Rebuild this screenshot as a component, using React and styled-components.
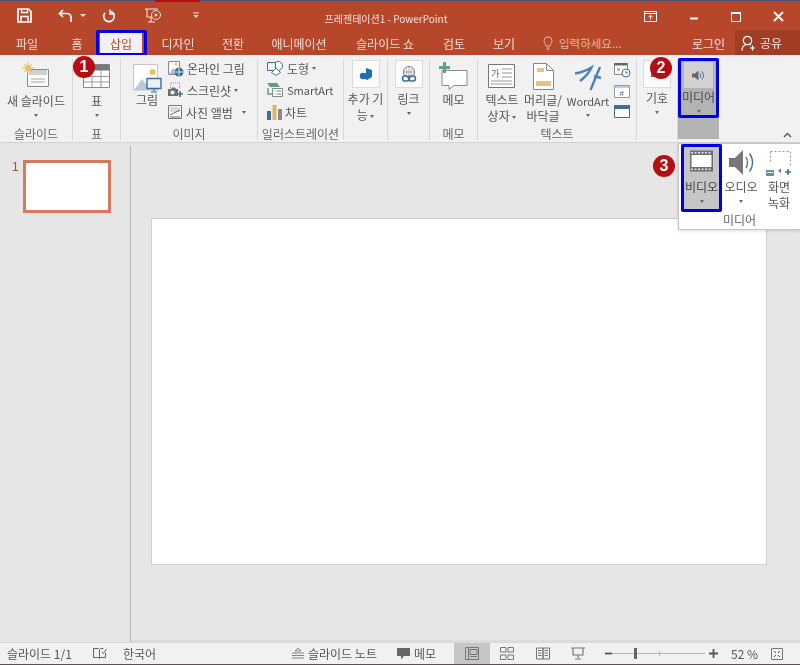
import React from 'react';
import styled, { createGlobalStyle } from 'styled-components';

const Global = createGlobalStyle`
  html, body { margin: 0; padding: 0; background: #e6e6e6; }
  body { font-family: "Noto Sans CJK KR", "Noto Sans", sans-serif; color: #444; }
`;

const Window = styled.div`
  position: relative;
  width: 800px;
  height: 665px;
  overflow: hidden;
  display: flex;
  flex-direction: column;
  filter: blur(0.3px);
`;

const TitleBar = styled.div`
  position: relative;
  height: 30px;
  flex: none;
  background: #b7472a;
  border-top: 1px solid #4f5070;
  box-sizing: border-box;
  display: grid;
  grid-template-columns: 240px 1fr 240px;
  align-items: center;
  color: #f6e4de;
`;

const TopEdge = styled.span`
  position: absolute;
  left: 155px;
  top: -1px;
  width: 45px;
  height: 2px;
  background: #b40d12;
`;

const Qat = styled.div`
  display: flex;
  align-items: center;
  height: 100%;
  padding-left: 17px;
`;

const QatSlot = styled.span`
  display: flex;
  width: ${p => p.$w}px;
  align-items: center;
`;

const Title = styled.div`
  text-align: center;
  font-size: 10px;
  padding-top: 6px;
  padding-right: 28px;
  white-space: nowrap;
`;

const WinControls = styled.div`
  display: flex;
  justify-content: flex-end;
  align-items: center;
  padding-right: 16px;
  gap: 32px;
  padding-top: 2px;
`;

const TabStrip = styled.div`
  height: 25px;
  flex: none;
  background: #b7472a;
  display: flex;
  align-items: stretch;
  color: #f5dfd8;
  font-size: 12px;
`;

const Tab = styled.div`
  position: relative;
  width: ${p => p.$w}px;
  flex: none;
  display: flex;
  align-items: center;
  justify-content: center;
  background: ${p => (p.$active ? '#f1f1f1' : 'transparent')};
  color: ${p => (p.$active ? '#b7472a' : 'inherit')};
  padding-top: 2px;
  box-sizing: border-box;
  white-space: nowrap;
`;

const TabMark = styled.span`
  position: absolute;
  left: -4px;
  right: -5px;
  top: 0;
  bottom: -1px;
  border: 3px solid #0000e6;
  border-radius: 2px;
`;

const TellMe = styled.div`
  display: flex;
  align-items: center;
  gap: 6px;
  margin-left: 19px;
  padding-top: 1px;
  color: #e3b3a4;
  font-size: 11.5px;
`;

const Login = styled.div`
  margin-left: auto;
  display: flex;
  align-items: center;
  padding-top: 1px;
  margin-right: 10px;
`;

const Share = styled.div`
  width: 65px;
  background: #a13d24;
  display: flex;
  align-items: center;
  gap: 4px;
  padding-left: 6px;
  box-sizing: border-box;
  color: #fbeee9;
`;

const Ribbon = styled.div`
  position: relative;
  height: 88px;
  flex: none;
  background: #f1f1f1;
  border-bottom: 1px solid #d2d2d2;
  box-sizing: border-box;
  display: flex;
  font-size: 12px;
  color: #555;
`;

const Group = styled.section`
  position: relative;
  width: ${p => p.$w}px;
  flex: none;
  display: flex;
  flex-direction: column;
  box-sizing: border-box;
  border-right: 1px solid #d8d8d8;
  margin: 4px 0 2px;
`;

const GroupBody = styled.div`
  flex: 1;
  display: flex;
  min-height: 0;
  justify-content: ${p => p.$justify || 'flex-start'};
  padding-left: ${p => p.$pl || 0}px;
`;

const GroupLabel = styled.div`
  height: 12px;
  line-height: 12px;
  text-align: center;
  font-size: 12px;
  color: #666;
  white-space: nowrap;
`;

const Big = styled.div`
  width: ${p => p.$w || 44}px;
  margin-left: ${p => p.$ml || 0}px;
  flex: none;
  display: flex;
  flex-direction: column;
  align-items: center;
  line-height: 16px;
  text-align: center;
  white-space: nowrap;
`;

const BigIcon = styled.div`
  height: ${p => p.$h || 34}px;
  flex: none;
  padding-top: ${p => p.$pt || 0}px;
  box-sizing: border-box;
  display: flex;
  align-items: flex-start;
  justify-content: center;
`;

const IconTile = styled.div`
  width: 28px;
  height: 28px;
  background: #fbfbfb;
  border: 1px solid #dcdcdc;
  box-sizing: border-box;
  display: flex;
  align-items: center;
  justify-content: center;
`;

const Stack = styled.div`
  display: flex;
  flex-direction: column;
  flex: none;
  padding-top: ${p => p.$pt || 0}px;
  gap: ${p => p.$gap || 0}px;
  margin-left: ${p => p.$ml || 0}px;
  margin-top: ${p => p.$mt || 0}px;
`;

const SmallRow = styled.div`
  display: flex;
  align-items: center;
  flex: none;
  height: 22px;
  gap: 3px;
  white-space: nowrap;
`;

const Latin = styled.span`
  font-size: 11px;
`;

const Caret = styled.i`
  display: ${p => (p.$inline ? 'inline-block' : 'block')};
  width: 0;
  height: 0;
  border-left: 2.5px solid transparent;
  border-right: 2.5px solid transparent;
  border-top: 3px solid #666;
  margin: ${p => p.$m || '5px auto 0'};
  vertical-align: middle;
`;

const MediaGroup = styled.section`
  position: relative;
  width: 41px;
  height: 81px;
  margin-top: 3px;
  background: #b3b3b3;
  display: flex;
  flex-direction: column;
  align-items: center;
  color: #4a4a4a;
  line-height: 16px;
  box-sizing: border-box;
`;

const MediaTile = styled.div`
  width: 29px;
  height: 26px;
  flex: none;
  margin: 4px 0 1px;
  background: #d2d2d2;
  display: flex;
  align-items: center;
  justify-content: center;
`;

const BlueBox = styled.span`
  position: absolute;
  left: 0;
  right: 0;
  top: 0;
  height: ${p => p.$h}px;
  border: 3px solid #0000e6;
  border-radius: 2px;
  box-sizing: border-box;
`;

const Collapse = styled.div`
  position: absolute;
  right: 8px;
  bottom: 4px;
  display: flex;
`;

const Badge = styled.span`
  position: absolute;
  left: ${p => p.$x - 11}px;
  top: ${p => p.$y - 11}px;
  width: 22px;
  height: 22px;
  border-radius: 50%;
  background: #b40d12;
  color: #fff;
  font: bold 16px/22px "Liberation Sans", sans-serif;
  text-align: center;
  z-index: 5;
`;

const Main = styled.div`
  flex: 1;
  display: flex;
  min-height: 0;
  background: #e6e6e6;
`;

const ThumbPane = styled.aside`
  width: 131px;
  flex: none;
  margin-top: 3px;
  border-right: 1px solid #b9b9b9;
  box-sizing: border-box;
  display: flex;
  align-items: flex-start;
  padding: 14px 0 0 12px;
  gap: 4px;
`;

const ThumbNum = styled.span`
  font: 12px/14px "Liberation Sans", sans-serif;
  color: #b7472a;
`;

const Thumb = styled.div`
  width: 88px;
  height: 53px;
  background: #fff;
  border: 3px solid #d9785f;
  box-sizing: border-box;
`;

const Stage = styled.div`
  flex: 1;
  padding: 75px 0 0 20px;
  border-bottom: 2px solid #dcdcdc;
`;

const Slide = styled.div`
  width: 616px;
  height: 347px;
  background: #fff;
  border: 1px solid #d0d0d0;
  box-sizing: border-box;
`;

const Popup = styled.div`
  position: absolute;
  left: 678px;
  top: 143px;
  width: 122px;
  height: 87px;
  background: #fff;
  border: 1px solid #c6c6c6;
  border-right: none;
  box-sizing: border-box;
  box-shadow: 0 1px 3px rgba(0, 0, 0, 0.15);
  z-index: 4;
  display: flex;
  flex-direction: column;
  font-size: 12px;
  color: #555;
  padding-bottom: 3px;
`;

const PopupItems = styled.div`
  flex: 1;
  display: flex;
  padding-left: 2px;
`;

const PopupItem = styled.div`
  position: relative;
  width: ${p => p.$w}px;
  height: 68px;
  flex: none;
  display: flex;
  flex-direction: column;
  align-items: center;
  text-align: center;
  line-height: 16px;
  background: ${p => (p.$on ? '#c6c6c6' : 'transparent')};
  color: ${p => (p.$on ? '#444' : 'inherit')};
`;

const PopupIcon = styled.div`
  height: 35px;
  flex: none;
  padding-top: 6px;
  box-sizing: border-box;
  display: flex;
  justify-content: center;
`;

const StatusBar = styled.footer`
  height: 23px;
  flex: none;
  background: #f1f1f1;
  border-top: 1px solid #d8d8d8;
  border-bottom: 1px solid #5d5252;
  box-sizing: border-box;
  display: flex;
  align-items: center;
  font-size: 12px;
  color: #555;
`;

const StatusText = styled.span`
  margin-left: ${p => p.$ml || 0}px;
  display: flex;
  flex: none;
  align-items: center;
  gap: 4px;
  white-space: nowrap;
`;

const ViewBtn = styled.div`
  width: 35.5px;
  height: 21px;
  flex: none;
  margin-left: ${p => p.$ml || 0}px;
  background: ${p => (p.$on ? '#c6c6c6' : 'transparent')};
  display: flex;
  align-items: center;
  justify-content: center;
`;

const Slider = styled.div`
  position: relative;
  width: 93px;
  height: 1px;
  flex: none;
  background: #b5b5b5;
  margin-right: 4px;
`;

const SliderKnob = styled.span`
  position: absolute;
  left: 22px;
  top: -5px;
  width: 3px;
  height: 11px;
  background: #666;
`;

const Tick = styled.span`
  position: absolute;
  left: 47px;
  top: -2px;
  width: 1px;
  height: 5px;
  background: #b5b5b5;
`;

const Svg = ({ w, h, children }) => (
  <svg width={w} height={h} viewBox={`0 0 ${w} ${h}`} fill="none" style={{ flex: 'none' }}>{children}</svg>
);

const SaveIcon = () => (
  <Svg w={15} h={15}>
    <path d="M1 1h10.500L14 3.500V14H1z" stroke="#fff" strokeWidth="1.700" />
    <path d="M4.500 1v3.500h6V1M4 14V8.500h7V14" stroke="#fff" strokeWidth="1.400" />
  </Svg>
);
const UndoIcon = () => (
  <Svg w={15} h={14}>
    <path d="M5 1 1.500 4.500 5 8" stroke="#fff" strokeWidth="1.700" />
    <path d="M2 4.500h7a4 4 0 0 1 4 4v4.500" stroke="#fff" strokeWidth="1.700" />
  </Svg>
);
const RedoIcon = () => (
  <Svg w={14} h={14}>
    <path d="M8.500 2.200A5.300 5.300 0 1 1 3 3.800" stroke="#fff" strokeWidth="1.600" />
    <path d="M8 .5v4.500h4.500" stroke="#fff" strokeWidth="1.400" />
  </Svg>
);
const ShowIcon = () => (
  <Svg w={16} h={15}>
    <path d="M0 1h13M2 1v8h5M6 9.500v4M3 14h7" stroke="#f6e4de" strokeWidth="1.100" />
    <circle cx="11" cy="7" r="4.500" stroke="#f6e4de" />
    <path d="m9.800 5 3.200 2-3.200 2z" fill="#f6e4de" />
  </Svg>
);
const QatMore = () => (
  <Svg w={6} h={7}>
    <path d="M0 1h6" stroke="#f6e4de" />
    <path d="M.3 3h5.400L3 6z" fill="#f6e4de" />
  </Svg>
);
const SmallDown = () => (
  <Svg w={6} h={4}>
    <path d="M0 0h6L3 3z" fill="#f6e4de" />
  </Svg>
);
const RibbonOptIcon = () => (
  <Svg w={13} h={11}>
    <path d="M.5 .5h12v10H.5zM.5 2.500h12" stroke="#fff" />
    <path d="M6.500 8.500v-4M4.500 6.200l2-2 2 2" stroke="#fff" />
  </Svg>
);
const MinIcon = () => (
  <Svg w={10} h={10}><path d="M1 6.500h8" stroke="#fff" strokeWidth="2" /></Svg>
);
const MaxIcon = () => (
  <Svg w={10} h={10}><path d="M.5 .5h9v9h-9z" stroke="#fff" /><path d="M0 1h10" stroke="#fff" strokeWidth="2" /></Svg>
);
const CloseIcon = () => (
  <Svg w={11} h={11}><path d="m1 1 9 9M10 1l-9 9" stroke="#fff" strokeWidth="1.900" /></Svg>
);
const BulbIcon = () => (
  <Svg w={10} h={14}>
    <path d="M3 10C3 8 1 7 1 4.800a4 4 0 0 1 8 0C9 7 7 8 7 10z" stroke="#e3b3a4" />
    <path d="M3.500 12h3M4 13.500h2" stroke="#e3b3a4" />
  </Svg>
);
const UserIcon = () => (
  <Svg w={15} h={16}>
    <circle cx="6.500" cy="5.500" r="4.200" stroke="#fff" strokeWidth="1.200" />
    <path d="M1 15.500c0-3 2-5.500 4.500-6M9 9.500l1 .5M11.500 10.500v5M9 13h5" stroke="#fff" strokeWidth="1.200" />
  </Svg>
);

const NewSlideIcon = () => (
  <Svg w={28} h={26}>
    <path d="M5.500 7.500h21v17h-21z" fill="#fafafa" stroke="#8a8a8a" />
    <path d="M7 8h18v5H7z" fill="#cfcfcf" />
    <path d="M9 17h14M9 20h14" stroke="#a9a9a9" />
    <circle cx="6" cy="6" r="3" fill="#f1c05e" />
    <path d="M6 0v12M0 6h12M2 2l8 8M10 2l-8 8" stroke="#f1c05e" />
  </Svg>
);
const TableIcon = () => (
  <Svg w={27} h={24}>
    <path d="M.5 .5h26v23H.5z" fill="#fff" stroke="#888" />
    <path d="M.5 .5h26v6H.500z" fill="#777" />
    <path d="M.5 12.500h26M.5 18h26M9 6v18M18 6v18" stroke="#999" />
  </Svg>
);
const PictureIcon = () => (
  <Svg w={29} h={29}>
    <path d="M.5 .5h24v25.500H.5z" fill="#fff" stroke="#c4c4c4" />
    <path d="M1 26 9 15l5 6 4-3 6 8z" fill="#b5cbdf" />
    <circle cx="19.500" cy="8" r="3" fill="#e9be6e" />
    <path d="M14 14.500h14v10H14z" fill="#eaf1f7" stroke="#3f6f98" strokeWidth="1.400" />
    <path d="M21 25v2.500M18 28h6" stroke="#3f6f98" />
  </Svg>
);
const OnlineIcon = () => (
  <Svg w={17} h={17}>
    <path d="M1.500 1.500h11v13h-11z" fill="#fff" stroke="#888" />
    <circle cx="9" cy="4" r="1.500" fill="#e9be6e" />
    <path d="M2 14 6 8l3 3v3z" fill="#a9c3db" />
    <circle cx="12" cy="12" r="4.500" fill="#3f6f98" />
    <path d="M7.500 12h9M12 7.500v9" stroke="#fff" strokeWidth=".8" />
  </Svg>
);
const ScreenshotIcon = () => (
  <Svg w={17} h={17}>
    <path d="M3.500 1v5M12.500 1v5" stroke="#999" strokeDasharray="1 1" />
    <path d="M4 1h9" stroke="#999" strokeDasharray="1 1" />
    <path d="M1 7h3l1-1.500h3L9 7h2v7H1z" fill="#6e6e6e" />
    <circle cx="5.500" cy="10.500" r="2" fill="#fff" />
    <path d="M13 9v6M10 12h6" stroke="#3f6f98" strokeWidth="1.600" />
  </Svg>
);
const AlbumIcon = () => (
  <Svg w={16} h={16}>
    <path d="M1.500 1.500h13v13h-13z" fill="#fff" stroke="#777" />
    <path d="M3 3h10v5H3z" fill="#cfdbe6" />
    <path d="M3 11 13 6M3 13h10" stroke="#666" />
  </Svg>
);
const ShapesIcon = () => (
  <Svg w={17} h={15}>
    <circle cx="11" cy="5" r="4.500" stroke="#3f6f98" fill="#fff" />
    <path d="M.5 1.500h8v8h-8z" stroke="#3f6f98" fill="#eef3f7" />
    <path d="m9 7 4.500 4.500L9 14.500l-4.500-3z" fill="#fff" stroke="#3f6f98" />
  </Svg>
);
const SmartArtIcon = () => (
  <Svg w={17} h={16}>
    <path d="M0 1h10l3 4H3z" fill="#5f9e8b" />
    <path d="M5.500 6.500h10v8h-10z" fill="#fff" stroke="#888" />
    <path d="M7.500 9h1M10 9h4M7.500 12h1M10 12h4" stroke="#777" />
    <path d="M1 6v6h4" stroke="#5f9e8b" strokeWidth="1.500" />
  </Svg>
);
const ChartIcon = () => (
  <Svg w={15} h={15}>
    <path d="M0 6h4v9H0z" fill="#3f6f98" />
    <path d="M5.500 0h4v15h-4z" fill="#e0b56a" />
    <path d="M11 4h4v11h-4z" fill="#8a8a8a" />
  </Svg>
);
const StoreIcon = () => (
  <Svg w={16} h={16}>
    <path d="M8 2 14 4v7l-5 3-3-1.500V8.500L8 7z" fill="#1f6fb2" />
    <circle cx="5" cy="10" r="3.200" fill="#1f6fb2" />
  </Svg>
);
const LinkIcon = () => (
  <Svg w={16} h={17}>
    <circle cx="8" cy="6" r="5.500" stroke="#777" fill="#fff" />
    <path d="M2.500 6h11M8 .5v11M4.500 2.500c2 2 2 5 0 7M11.500 2.500c-2 2-2 5 0 7" stroke="#888" strokeWidth=".7" />
    <rect x="1.500" y="10" width="7" height="5" rx="2.500" stroke="#3f6f98" strokeWidth="1.500" fill="none" />
    <rect x="7.500" y="10" width="7" height="5" rx="2.500" stroke="#3f6f98" strokeWidth="1.500" fill="none" />
  </Svg>
);
const CommentIcon = () => (
  <Svg w={29} h={28}>
    <path d="M3 8.500h25v15H15l-5 4v-4H3z" fill="#fff" stroke="#8a8a8a" />
    <path d="M4 0h3v4h4v3H7v4H4V7H0V4h4z" fill="#5f9e8b" />
  </Svg>
);
const TextBoxIcon = () => (
  <Svg w={28} h={25}>
    <path d="M.5 .5h26v23H.5z" fill="#fff" stroke="#777" />
    <text x="3" y="13" fontSize="9" fill="#3f6f98" fontFamily="Noto Sans CJK KR">가</text>
    <path d="M14 5h10M14 9h10M14 13h10M3 17h21M3 20h21" stroke="#999" />
  </Svg>
);
const HeaderIcon = () => (
  <Svg w={21} h={27}>
    <path d="M.5 .5h13l7 7v19H.5z" fill="#fff" stroke="#888" />
    <path d="M13.500 .5v7h7" stroke="#888" />
    <path d="M4 5h7v4H4zM3 18h15v5H3z" fill="#e8c37f" />
  </Svg>
);
const WordArtIcon = () => (
  <Svg w={27} h={28}>
    <path d="M0 10.500Q8 9.500 16.500 4.500 13 12 5 18" stroke="#4c82b5" strokeWidth="2.400" />
    <path d="M25 4 15.500 27M19 13l7 2" stroke="#4c82b5" strokeWidth="2.400" />
  </Svg>
);
const DateIcon = () => (
  <Svg w={17} h={16}>
    <path d="M.5 1.500h13v11H.5z" fill="#fff" stroke="#888" />
    <path d="M.5 1h13v2.500H.5z" fill="#666" />
    <path d="M3 6h3v3H3z" fill="#e0b56a" />
    <circle cx="12" cy="11" r="4" fill="#fff" stroke="#3f6f98" />
    <path d="M12 9v2h2" stroke="#3f6f98" />
  </Svg>
);
const NumberIcon = () => (
  <Svg w={16} h={13}>
    <path d="M.5 .5h15v12H.5z" fill="#fff" stroke="#999" />
    <path d="M1 1h14v2H1z" fill="#bcd0e0" />
    <text x="5.500" y="10.500" fontSize="8" fill="#3f6f98" fontFamily="Liberation Sans">#</text>
  </Svg>
);
const ObjectIcon = () => (
  <Svg w={16} h={13}>
    <path d="M.5 .5h15v12H.5z" fill="#fff" stroke="#3f6f98" />
    <path d="M0 0h16v4H0z" fill="#3f6f98" />
  </Svg>
);
const SymbolIcon = () => (
  <Svg w={12} h={6}><path d="M0 1h12v5H0z" fill="#3f6f98" /></Svg>
);
const SpeakerSmall = () => (
  <Svg w={13} h={11}>
    <path d="M0 3.500h3L6.500 .5v10L3 7.500H0z" fill="#666" />
    <path d="M8 3c1 1.500 1 3.500 0 5M10 1.500c2 2.500 2 5.500 0 8" stroke="#3f6f98" />
  </Svg>
);
const FilmIcon = () => (
  <Svg w={23} h={22}>
    <path d="M0 .5h23v21H0z" fill="#6f6f6f" />
    <path d="M1.500 5h20v12h-20z" fill="#fff" />
    <path d="M1 2.700h21M1 19.300h21" stroke="#e4e4e4" strokeWidth="1.400" strokeDasharray="2 1.500" />
  </Svg>
);
const SpeakerBig = () => (
  <Svg w={25} h={25}>
    <path d="M0 8h6l8-8v25l-8-8H0z" fill="#777" />
    <path d="M17 7c2 3 2 8 0 11M20.500 3.500c4 5 4 13 0 18" stroke="#3f6f98" strokeWidth="1.300" />
  </Svg>
);
const RecordIcon = () => (
  <Svg w={26} h={27}>
    <path d="M4.500 1.500h20v14" stroke="#999" strokeDasharray="2 2" />
    <path d="M4.500 1.500v12" stroke="#999" strokeDasharray="2 2" />
    <path d="M0 20h8v6H0z" fill="#6e8ea8" />
    <path d="M1 22.500h6" stroke="#fff" />
    <path d="M12 20.500l3-2v5z" fill="#777" />
    <path d="M22 19v6M19 22h6" stroke="#3f6f98" strokeWidth="1.600" />
  </Svg>
);
const CollapseIcon = () => (
  <Svg w={9} h={6}><path d="m1 5 3.500-3.500L8 5" stroke="#555" strokeWidth="1.400" /></Svg>
);
const BookIcon = () => (
  <Svg w={14} h={13}>
    <path d="M.5 1.500h5l1 1v9l-1-1h-5zM6.500 2.500l1-1h3M6.500 11.500l1-1h5V6" stroke="#666" />
    <path d="m9 5 1.500 1.500L13.500 2" stroke="#666" />
  </Svg>
);
const NoteIcon = () => (
  <Svg w={12} h={11}>
    <path d="M6 0 9 3H3zM0 5h12M0 7.500h12M0 10h12" stroke="#777" strokeWidth=".9" />
  </Svg>
);
const MemoIcon = () => (
  <Svg w={13} h={12}><path d="M0 0h13v8H7l-3 3.500V8H0z" fill="#666" /></Svg>
);
const NormalView = () => (
  <Svg w={14} h={13}>
    <path d="M.5 .5h13v12H.5zM3.500 .5v12M5 2.500h7v5H5zM5 9.500h7" stroke="#777" />
  </Svg>
);
const SorterView = () => (
  <Svg w={14} h={13}>
    <path d="M.5 .5h5.500v4.500H.5zM8 .5h5.500v4.500H8zM.5 8h5.500v4.500H.5zM8 8h5.500v4.500H8z" stroke="#777" />
  </Svg>
);
const ReadView = () => (
  <Svg w={14} h={13}>
    <path d="M.5 1h6.500v11H.5zM7 1h6.500v11H7zM2 3.500h3.500M2 6h3.500M2 8.500h3.500M8.500 3.500H12M8.500 6H12M8.500 8.500H12" stroke="#777" />
  </Svg>
);
const ShowView = () => (
  <Svg w={14} h={13}>
    <path d="M0 1h14M2 1v7h10V1M7 8v3M4 12h6" stroke="#777" strokeWidth="1.200" />
  </Svg>
);
const Minus = () => <Svg w={7} h={3}><path d="M0 1.500h7" stroke="#555" strokeWidth="1.800" /></Svg>;
const Plus = () => <Svg w={9} h={9}><path d="M0 4.500h9M4.500 0v9" stroke="#555" strokeWidth="1.800" /></Svg>;
const FitIcon = () => (
  <Svg w={12} h={12}>
    <path d="M.5 .5h11v11H.5z" stroke="#777" />
    <path d="M3 3 5 5M9 3 7 5M3 9l2-2M9 9 7 7" stroke="#555" />
  </Svg>
);

const tabs = [
  ['파일', 54], ['홈', 46], ['삽입', 42, true], ['디자인', 72], ['전환', 38],
  ['애니메이션', 94], ['슬라이드 쇼', 78], ['검토', 60], ['보기', 40],
];

const App = () => (
  <Window>
    <Global />
    <TitleBar>
      <TopEdge />
      <Qat>
        <QatSlot $w={41}><SaveIcon /></QatSlot>
        <QatSlot $w={22}><UndoIcon /></QatSlot>
        <QatSlot $w={22}><SmallDown /></QatSlot>
        <QatSlot $w={43}><RedoIcon /></QatSlot>
        <QatSlot $w={48}><ShowIcon /></QatSlot>
        <QatSlot $w={10}><QatMore /></QatSlot>
      </Qat>
      <Title>프레젠테이션1 - PowerPoint</Title>
      <WinControls>
        <RibbonOptIcon />
        <MinIcon />
        <MaxIcon />
        <CloseIcon />
      </WinControls>
    </TitleBar>

    <TabStrip>
      {tabs.map(([label, w, active]) => (
        <Tab key={label} $w={w} $active={active}>
          {label}
          {active && <TabMark />}
        </Tab>
      ))}
      <TellMe><BulbIcon />입력하세요...</TellMe>
      <Login>로그인</Login>
      <Share><UserIcon />공유</Share>
    </TabStrip>

    <Ribbon>
      <Group $w={73}>
        <GroupBody $justify="center">
          <Big $w={72}>
            <BigIcon $pt={3}><NewSlideIcon /></BigIcon>
            새 슬라이드
            <Caret />
          </Big>
        </GroupBody>
        <GroupLabel>슬라이드</GroupLabel>
      </Group>
      <Group $w={48}>
        <GroupBody $justify="center">
          <Big $w={44}>
            <BigIcon $pt={5}><TableIcon /></BigIcon>
            표
            <Caret />
          </Big>
        </GroupBody>
        <GroupLabel>표</GroupLabel>
      </Group>
      <Group $w={137}>
        <GroupBody $pl={10}>
          <Big $w={32}>
            <BigIcon $pt={5} $h={33}><PictureIcon /></BigIcon>
            그림
          </Big>
          <Stack $ml={4} $mt={-2}>
            <SmallRow><OnlineIcon />온라인 그림</SmallRow>
            <SmallRow><ScreenshotIcon />스크린샷<Caret $inline $m="0" /></SmallRow>
            <SmallRow><AlbumIcon />사진 앨범<Caret $inline $m="0 0 0 6px" /></SmallRow>
          </Stack>
        </GroupBody>
        <GroupLabel>이미지</GroupLabel>
      </Group>
      <Group $w={86}>
        <GroupBody $pl={9}>
          <Stack $mt={-2}>
            <SmallRow><ShapesIcon />도형<Caret $inline $m="0" /></SmallRow>
            <SmallRow><SmartArtIcon /><Latin>SmartArt</Latin></SmallRow>
            <SmallRow><ChartIcon />차트</SmallRow>
          </Stack>
        </GroupBody>
        <GroupLabel>일러스트레이션</GroupLabel>
      </Group>
      <Group $w={44}>
        <GroupBody $justify="center">
          <Big $w={43}>
            <BigIcon $pt={1} $h={32}><IconTile><StoreIcon /></IconTile></BigIcon>
            추가 기
            <span>능 <Caret $inline $m="0" /></span>
          </Big>
        </GroupBody>
        <GroupLabel />
      </Group>
      <Group $w={42}>
        <GroupBody $justify="center">
          <Big $w={41}>
            <BigIcon $pt={1} $h={32}><IconTile><LinkIcon /></IconTile></BigIcon>
            링크
            <Caret />
          </Big>
        </GroupBody>
        <GroupLabel />
      </Group>
      <Group $w={48}>
        <GroupBody $justify="center">
          <Big $w={47}>
            <BigIcon $pt={3} $h={33}><CommentIcon /></BigIcon>
            메모
          </Big>
        </GroupBody>
        <GroupLabel>메모</GroupLabel>
      </Group>
      <Group $w={159}>
        <GroupBody>
          <Big $w={48}>
            <BigIcon $pt={5} $h={33}><TextBoxIcon /></BigIcon>
            텍스트
            <span>상자 <Caret $inline $m="0" /></span>
          </Big>
          <Big $w={34}>
            <BigIcon $pt={4} $h={33}><HeaderIcon /></BigIcon>
            머리글/
            <span>바닥글</span>
          </Big>
          <Big $w={44} $ml={6}>
            <BigIcon $pt={4} $h={34}><WordArtIcon /></BigIcon>
            <Latin>WordArt</Latin>
            <Caret />
          </Big>
          <Stack $ml={4} $pt={3} $gap={7}>
            <DateIcon />
            <NumberIcon />
            <ObjectIcon />
          </Stack>
        </GroupBody>
        <GroupLabel>텍스트</GroupLabel>
      </Group>
      <Group $w={41}>
        <GroupBody $justify="center">
          <Big $w={40}>
            <BigIcon $pt={1} $h={31}><IconTile><SymbolIcon /></IconTile></BigIcon>
            기호
            <Caret />
          </Big>
        </GroupBody>
        <GroupLabel />
      </Group>
      <MediaGroup>
        <MediaTile><SpeakerSmall /></MediaTile>
        미디어
        <Caret />
        <BlueBox $h={60} />
      </MediaGroup>
      <Collapse><CollapseIcon /></Collapse>
    </Ribbon>

    <Main>
      <ThumbPane>
        <ThumbNum>1</ThumbNum>
        <Thumb />
      </ThumbPane>
      <Stage>
        <Slide />
      </Stage>
    </Main>

    <StatusBar>
      <StatusText $ml={7}>슬라이드 1/1</StatusText>
      <StatusText $ml={21}><BookIcon /></StatusText>
      <StatusText $ml={16}>한국어</StatusText>
      <StatusText $ml={136}><NoteIcon />슬라이드 노트</StatusText>
      <StatusText $ml={20}><MemoIcon />메모</StatusText>
      <ViewBtn $on $ml={18}><NormalView /></ViewBtn>
      <ViewBtn><SorterView /></ViewBtn>
      <ViewBtn><ReadView /></ViewBtn>
      <ViewBtn><ShowView /></ViewBtn>
      <StatusText $ml={9}><Minus /></StatusText>
      <Slider><Tick /><SliderKnob /></Slider>
      <Plus />
      <StatusText $ml={13}>52 %</StatusText>
      <StatusText $ml={13}><FitIcon /></StatusText>
    </StatusBar>

    <Popup>
      <PopupItems>
        <PopupItem $w={41} $on>
          <PopupIcon><FilmIcon /></PopupIcon>
          비디오
          <Caret />
          <BlueBox $h={68} />
        </PopupItem>
        <PopupItem $w={38}>
          <PopupIcon><SpeakerBig /></PopupIcon>
          오디오
          <Caret />
        </PopupItem>
        <PopupItem $w={38}>
          <PopupIcon><RecordIcon /></PopupIcon>
          화면
          <span>녹화</span>
        </PopupItem>
      </PopupItems>
      <GroupLabel>미디어</GroupLabel>
    </Popup>

    <Badge $x={84} $y={67}>1</Badge>
    <Badge $x={661} $y={68}>2</Badge>
    <Badge $x={664} $y={166}>3</Badge>
  </Window>
);

export default App;
